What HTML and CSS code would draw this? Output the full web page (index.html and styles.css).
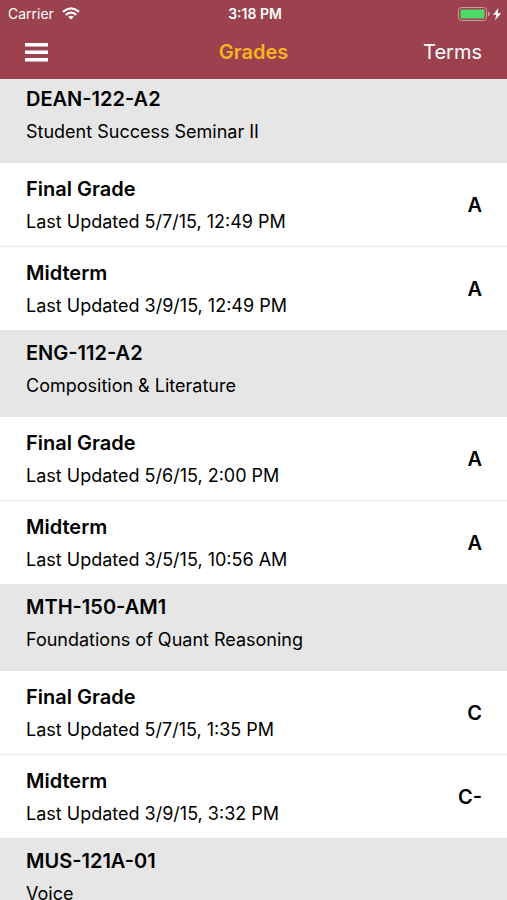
FILE: index.html
```html
<!DOCTYPE html>
<html lang="en">
<head>
  <meta charset="UTF-8">
  <meta name="viewport" content="width=device-width, initial-scale=1.0">
  <title>Grades</title>
  <link rel="stylesheet" href="styles.css">
</head>
<body>

  <header class="header">
    <div class="status">
      <div class="carrier">
        <span>Carrier</span>
        <svg width="18" height="13" viewBox="0 0 18 13" fill="none" stroke="#fff" stroke-width="2.2">
          <path d="M1 4.8 Q9 -2 17 4.8"/>
          <path d="M3.8 7.8 Q9 3.6 14.2 7.8"/>
          <path d="M6.3 9.9 Q9 7.7 11.7 9.9 L9 12.6 Z" fill="#fff" stroke="none"/>
        </svg>
      </div>
      <div class="time">3:18 PM</div>
      <div class="battery">
        <svg width="44" height="14" viewBox="0 0 44 14">
          <rect x="0.5" y="0.5" width="28" height="13" rx="3" fill="none" stroke="#cf9a9f"/>
          <rect x="2.5" y="2.5" width="24" height="9" rx="1" fill="#4cd964"/>
          <path d="M30 4.8 Q32 5.3 32 7 Q32 8.7 30 9.2 Z" fill="#cf9a9f"/>
          <path d="M40.5 1 L35 7.8 H38.4 L37 13.2 L43.2 6.2 H39.6 Z" fill="#fff"/>
        </svg>
      </div>
    </div>
    <nav class="nav">
      <button class="menu" aria-label="Menu">
        <svg width="23" height="19" viewBox="0 0 23 19" fill="#fff">
          <rect width="23" height="3.5"/>
          <rect y="7.5" width="23" height="3.5"/>
          <rect y="15" width="23" height="3.5"/>
        </svg>
      </button>
      <h1>Grades</h1>
      <button class="terms">Terms</button>
    </nav>
  </header>

  <main>
    <section>
      <div class="course">
        <h2>DEAN-122-A2</h2>
        <p>Student Success Seminar II</p>
      </div>
      <div class="grade">
        <div>
          <h3>Final Grade</h3>
          <p>Last Updated 5/7/15, 12:49 PM</p>
        </div>
        <strong>A</strong>
      </div>
      <div class="grade">
        <div>
          <h3>Midterm</h3>
          <p>Last Updated 3/9/15, 12:49 PM</p>
        </div>
        <strong>A</strong>
      </div>
    </section>

    <section>
      <div class="course">
        <h2>ENG-112-A2</h2>
        <p>Composition &amp; Literature</p>
      </div>
      <div class="grade">
        <div>
          <h3>Final Grade</h3>
          <p>Last Updated 5/6/15, 2:00 PM</p>
        </div>
        <strong>A</strong>
      </div>
      <div class="grade">
        <div>
          <h3>Midterm</h3>
          <p>Last Updated 3/5/15, 10:56 AM</p>
        </div>
        <strong>A</strong>
      </div>
    </section>

    <section>
      <div class="course">
        <h2>MTH-150-AM1</h2>
        <p>Foundations of Quant Reasoning</p>
      </div>
      <div class="grade">
        <div>
          <h3>Final Grade</h3>
          <p>Last Updated 5/7/15, 1:35 PM</p>
        </div>
        <strong>C</strong>
      </div>
      <div class="grade">
        <div>
          <h3>Midterm</h3>
          <p>Last Updated 3/9/15, 3:32 PM</p>
        </div>
        <strong>C-</strong>
      </div>
    </section>

    <section>
      <div class="course">
        <h2>MUS-121A-01</h2>
        <p>Voice</p>
      </div>
    </section>
  </main>

</body>
</html>
```
FILE: styles.css
```css
* {
  box-sizing: border-box;
}

body {
  margin: 0;
  height: 100vh;
  display: flex;
  flex-direction: column;
  overflow: hidden;
  font-family: Inter, "Liberation Sans", sans-serif;
  font-size: 18px;
  color: #000;
  background: #fff;
}

h1, h2, h3, p {
  margin: 0;
}

h2, h3 {
  font-size: 20px;
  line-height: 32px;
  font-weight: 600;
}

p {
  line-height: 34px;
}

.header {
  flex: none;
  background: #9b424e;
  color: #fff;
}

.status, .nav {
  display: grid;
  grid-template-columns: 1fr auto 1fr;
  align-items: center;
}

.status {
  height: 27px;
  padding: 0 5px 0 8px;
  font-size: 14px;
}

.carrier {
  display: flex;
  align-items: center;
  gap: 8px;
}

.time {
  font-weight: 600;
}

.battery {
  justify-self: end;
  display: flex;
}

.nav {
  height: 52px;
  padding: 0 25px 2px;
}

.nav h1 {
  font-size: 20px;
  font-weight: 600;
  color: #fcb322;
}

button {
  padding: 0;
  border: none;
  background: none;
  font-family: inherit;
  color: #fff;
  cursor: pointer;
}

.menu {
  justify-self: start;
  display: flex;
}

.terms {
  justify-self: end;
  font-size: 20px;
}

main {
  flex: 1;
  min-height: 0;
  overflow-y: auto;
  scrollbar-width: none;
}

.course {
  min-height: 87px;
  padding: 7px 25px 0 26px;
  background: #e6e6e6;
}

section:first-child .course {
  min-height: 84px;
  padding-top: 4px;
}

.grade {
  display: flex;
  align-items: center;
  justify-content: space-between;
  min-height: 83px;
  padding: 0 25px 0 26px;
}

.grade + .grade {
  min-height: 84px;
  border-top: 1px solid #e8e8e8;
}

.grade h3 {
  padding-top: 3px;
}

.grade strong {
  font-size: 20px;
  font-weight: 600;
}
```
